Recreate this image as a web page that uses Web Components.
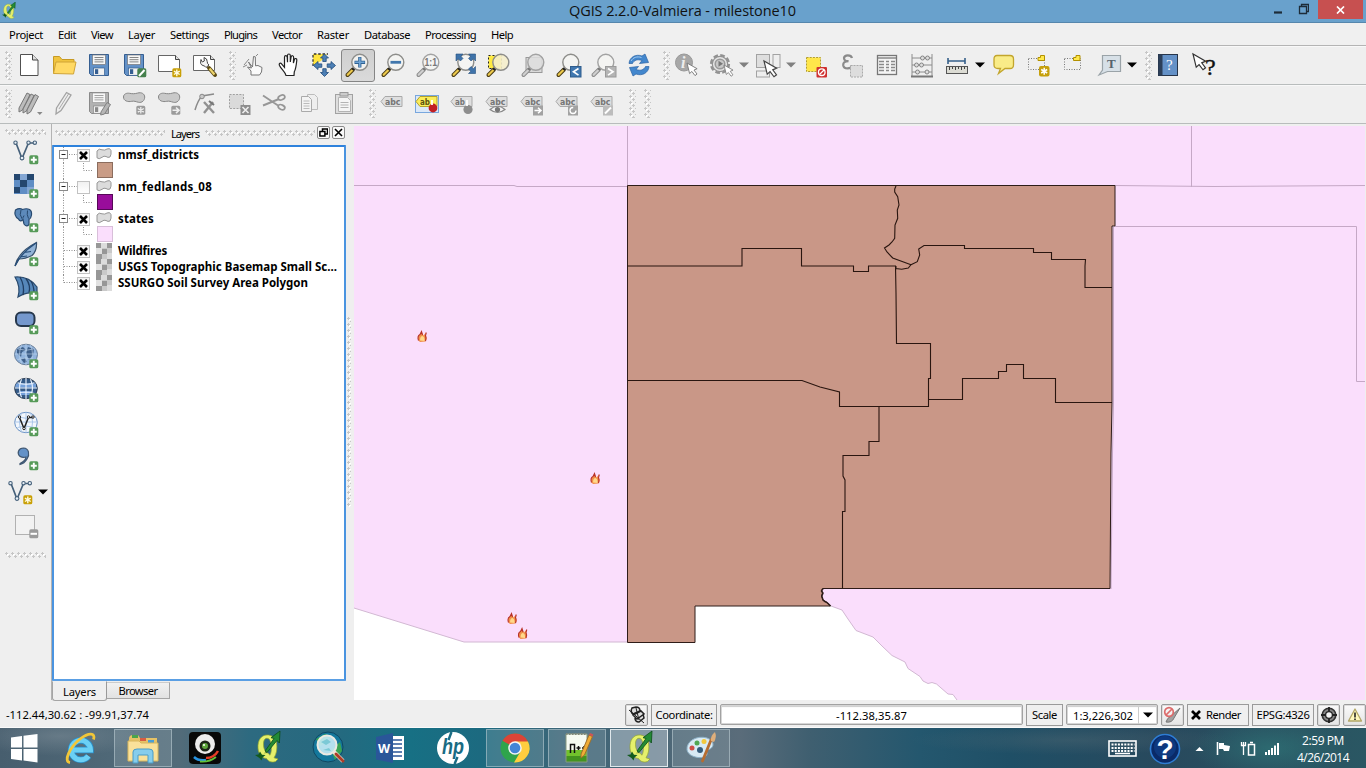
<!DOCTYPE html>
<html lang="en">
<head>
<meta charset="utf-8">
<title>QGIS 2.2.0-Valmiera - milestone10</title>
<style>
html,body{margin:0;width:1366px;height:768px;overflow:hidden;background:#efefef;
font-family:"Noto Sans","DejaVu Sans",sans-serif;font-size:11.2px;color:#000}
</style>
</head>
<body>
<qgis-desktop></qgis-desktop>
<script>
const SANS = '"Open Sans","Noto Sans",sans-serif';

/* ---------- icon fragments ---------- */
const badge = (fill, mark) => `<g transform="translate(15 15)"><rect x=".3" y=".3" width="9" height="9" rx="1.6" fill="${fill}"/>${mark}</g>`;
const plus = badge('#569a58', '<path d="M4.8 1.8v6M1.8 4.8h6" stroke="#fff" stroke-width="1.9"/>');
const star = badge('#c9a007', '<path d="M4.8 1.4v6.800M1.900 3.100l5.800 3.400M1.900 6.500l5.800-3.400" stroke="#fffbe0" stroke-width="1.4"/>');
const greyBadge = m => badge('#9b9b9b', m);
const lens = (o = {}) => `<path d="M7 16.500L1.500 22" stroke="${o.g ? '#8d8d8d' : '#4a3a12'}" stroke-width="4" stroke-linecap="round"/><path d="M6.200 17.300L1.700 21.800" stroke="${o.g ? '#cfcfcf' : '#ecc94c'}" stroke-width="2.2" stroke-linecap="round"/><path d="M8.600 14.600L6.400 16.800" stroke="${o.g ? '#777' : '#222'}" stroke-width="2.6"/><circle cx="13.8" cy="9.3" r="8" fill="${o.fill || '#f4f4f2'}" fill-opacity="${o.fo || .9}" stroke="${o.g ? '#a2a2a2' : '#8d8d8a'}" stroke-width="1.4"/>`;
const floppy = (a, b, c) => `<path d="M2.500 1.500h19v21h-17l-2-2z" fill="${a}" stroke="${b}"/><rect x="5.5" y="2" width="13" height="9.5" fill="#f7f7f7" stroke="${c}" stroke-width=".7"/><path d="M7.500 4.500h9M7.500 6.700h9M7.500 8.900h9" stroke="${c}" stroke-width=".9"/><rect x="6.5" y="15" width="11" height="7.3" fill="#f2f2f2" stroke="${b}" stroke-width=".7"/><rect x="8" y="16.2" width="3.2" height="4.8" fill="${b}"/>`;
const blob = `<path d="M1.500 6C1.500 3 4.500 1.800 7.500 2.300c3 .6 5 .6 8-.2 4-1.200 7.200.7 7.200 4s-2.700 6-6.200 5.200c-3-.7-4-1.500-6.700-1C6 11.200 1.500 10 1.500 6z" fill="#c9c9c9" stroke="#868686"/>`;
const cursor = (t, f = '#fff', s = '#777') => `<path transform="${t}" d="M0 0l2.800 11.500 2.500-2.300 3.400 4.500 2.200-1.700-3.300-4.300 3.400-1.500z" fill="${f}" stroke="${s}" stroke-width="1"/>`;
const tag = (f, s, t, label = 'abc', w = 15.5) => `<path d="M1 10.500l4-5h17v10H5z" fill="${f}" stroke="${s}" stroke-linejoin="round"/><text x="5" y="13.5" font-family="DejaVu Sans,sans-serif" font-weight="700" font-size="8.5" textLength="${w}" lengthAdjust="spacingAndGlyphs" fill="${t}">${label}</text>`;
const gtag = tag('#dfdfdf', '#a9a9a9', '#757575');
const gtagShort = tag('#dfdfdf', '#a9a9a9', '#757575', 'ab', 10);
const globeLines = (s, w) => `<path d="M1 10h22M3.500 4.800q8.500 3 17 0M3.500 15.500q8.500-3 17 0M12 0v21M7.500 1.200q-4 9 0 18M16.500 1.200q4 9 0 18" fill="none" stroke="${s}" stroke-width="${w}"/>`;
const vee = `<path d="M3 3.500L9 19 15.500 3.500h6" fill="none" stroke="#45607a" stroke-width="1.7"/><g fill="#e8f0f7" stroke="#45607a" stroke-width="1.1"><circle cx="2.5" cy="3.2" r="1.7"/><circle cx="9" cy="18.5" r="1.9"/><circle cx="15.5" cy="3.2" r="1.7"/><circle cx="21.8" cy="3.2" r="1.7"/></g>`;
const qlogo = `<path d="M13 4C7.500 4 3.500 9 4 17c.4 6 3.500 10 8.500 10.500 1.500 2.500 4.500 4.500 9 3l2.500-2.500-4-1.200C22.500 23 23.500 18 22.500 11 21.500 6 17.500 4 13 4zm0 3.300c2.800 0 3.900 3.500 4.300 8 .3 4-.3 7.500-1.500 8.900-1.300-2.500-3.300-3-5.300-2 .7-1 1.500-1.300 2.500-1.200-2.500-.8-3.400-4-3.500-7.500-.1-3.500 1-6.200 3.500-6.200z" fill="#e5f06c" stroke="#92a52d" stroke-width=".7"/><path d="M11 20L20 7.500l-3-.8L26 0l-.6 12-2.400-2.500L13 21.500z" fill="#238a35" stroke="#0c4d18" stroke-width=".8"/><path d="M1 24l3.500-.5L6 20.500l2 3.300 3.500.3-3 2.400L7.500 29.500l-2-2.600z" fill="#135a1d"/>`;

const ICONS = {
 new:`<path d="M3.500 1.500h12l5.500 5.500v15.500h-17.500z" fill="#fff" stroke="#505050"/><path d="M15.500 1.500v5.500h5.500" fill="#ddd" stroke="#444"/>`,
 open:`<path d="M1.500 20.500v-17h6l2.500 3h12v3" fill="#f0c43f" stroke="#c79a24"/><path d="M1.500 20.500l2.500-11.500h20l-2.500 12z" fill="#ffd964" stroke="#d0a437"/>`,
 save:floppy('#6391c7','#355e91','#777'),
 saveas:floppy('#6391c7','#355e91','#777')+badge('#45804d','<path d="M2 8l5.500-6" stroke="#fff" stroke-width="2"/>'),
 composer:`<path d="M1.500 2.500h17l4 4v12h-21z" fill="#fff" stroke="#666"/><path d="M18.500 2.500v4h4" fill="#ddd" stroke="#444"/>`+star,
 manager:`<path d="M1.500 2.500h17l4 4v11h-21z" fill="#fff" stroke="#666"/><path d="M18.500 2.500v4h4" fill="#ddd" stroke="#444"/><path d="M17 15l6 7" stroke="#5b4a14" stroke-width="4" stroke-linecap="round"/><path d="M17.500 15.500l5 6" stroke="#ecd36c" stroke-width="2.2"/><path d="M9 6.500q-1.500 5 2 6 2 .3 3 2l3-2.500q-2-1.500-1.800-3.500.2-3-3.200-4l.3 3.500-2 1z" fill="#f5f5f5" stroke="#444"/>`,
 touch:`<path d="M9 22v-4L5.500 14l4 1-3-6 4 5 1-10.500 1.800.3.2 9 2.500-.3 4 2-.5 4.500-2 3z" fill="#fafafa" stroke="#777"/><path d="M2 12l5-6M14 3l2-2M1 14l4-2" stroke="#888"/>`,
 pan:`<path d="M9 22.500c-.5-3.500-5-6.500-6.500-10-1-2.500 1-3 2.500-1.200l2.500 3V4.200c0-2 2.500-2 2.700 0l.3 5V2.500c0-2 2.800-2 2.800 0V9l.8-5c.3-2 2.700-1.500 2.500.5l-.2 5.500 1-3.500c.6-1.700 2.700-1 2.400.8-.5 5-1 9-2.500 11.500l-.3 3.700z" fill="#fff" stroke="#222" stroke-width="1.2"/>`,
 pansel:`<path d="M1 12V1h14l-6 7z" fill="#ffe53f"/><path d="M1 13V1h15" fill="none" stroke="#333" stroke-width="1.3" stroke-dasharray="2.5 1.8"/><g fill="#4c7fb5" stroke="#1f4a7a" stroke-width=".8"><path d="M12.500 1l4 4h-2.300v3.500h-3.400V5H8.500z"/><path d="M12.500 23.500l4-4h-2.300v-3.800h-3.400v3.800H8.500z"/><path d="M1.500 12.500l4.500-4v2.400h3.800v3.400H6v2.200z"/><path d="M23.500 12.500l-4.500-4v2.400h-3.800v3.400H19v2.200z"/></g>`,
 zoomin:lens()+`<path d="M13.800 4v10.600M8.500 9.300h10.600" stroke="#2f6293" stroke-width="3.2"/><path d="M13.800 4.600v9.400M9.100 9.300h9.400" stroke="#6fa3d4" stroke-width="1.6"/>`,
 zoomout:lens()+`<path d="M8.500 9.300h10.600" stroke="#4177ad" stroke-width="2.8"/>`,
 zoom11:lens({g:1})+`<text x="7.5" y="13" font-size="10" font-weight="700" font-family="Liberation Sans,sans-serif" textLength="12.5" lengthAdjust="spacingAndGlyphs" fill="#777">1:1</text>`,
 zoomfull:lens()+`<g fill="#3f73aa" stroke="#244f7d" stroke-width=".6"><path d="M4 1h7L8.800 3.200l2.200 2.200-2.600 2.600-2.200-2.200L4 8z"/><path d="M23.500 1h-7l2.200 2.200-2.200 2.200 2.600 2.600 2.200-2.200 2.200 2.200z"/><path d="M23.500 20.500h-7l2.200-2.200-2.200-2.200 2.600-2.600 2.200 2.200 2.200-2.200z"/></g>`,
 zoomsel:`<rect x="1.5" y="2.5" width="13" height="13" fill="#ffea3f" stroke="#222" stroke-dasharray="2 2"/>`+lens({fill:'#f5eecb'}),
 zoomlayer:`<rect x="4" y="4.5" width="16" height="15" fill="#dadada" stroke="#999"/>`+lens({g:1,fill:'#dedede',fo:.85}),
 zoomprev:lens()+`<rect x="13.5" y="13.5" width="10.5" height="10.5" fill="#4178b0" stroke="#2f5d8d"/><path d="M21.500 15.500l-5 3.300 5 3.300" fill="none" stroke="#fff" stroke-width="1.7"/>`,
 zoomnext:lens({g:1})+`<rect x="13.5" y="13.5" width="10.5" height="10.5" fill="#b4b4b4" stroke="#9a9a9a"/><path d="M16 15.500l5 3.300-5 3.300" fill="none" stroke="#fff" stroke-width="1.7"/>`,
 refresh:`<g fill="#4387cd" stroke="#2a62a4" stroke-width=".7"><path d="M2 10.500C2.500 4 9 .7 15 3l3-2 3.500 8.500-9 1 2.500-3C10.500 6 7 7 5.500 10.500z"/><path d="M22 13.500c-.5 6.500-7 9.800-13 7.500l-3 2-3.500-8.500 9-1-2.500 3c4.500 1.500 8 .5 9.500-3z"/></g><path d="M4 8C6 4.500 10 3 14.500 4.500" fill="none" stroke="#a4cbf0"/>`,
 info:`<circle cx="10" cy="9.5" r="8.5" fill="#a7a7a7" stroke="#989898"/><text x="7" y="15" font-family="Liberation Serif,serif" font-size="16" font-weight="700" font-style="italic" fill="#eee">i</text>`+cursor('translate(13 10) scale(.92)'),
 action:`<circle cx="11" cy="11" r="8.6" fill="none" stroke="#929292" stroke-width="3" stroke-dasharray="4.5 2.25"/><circle cx="11" cy="11" r="7.7" fill="#e4e4e4" stroke="#929292" stroke-width="1.2"/><circle cx="11" cy="11" r="4.8" fill="#c8c8c8" stroke="#999" stroke-width="1.5"/><path d="M9.500 7.800l4.500 3-4.500 3z" fill="#777"/>`+cursor('translate(15 12) scale(.82)'),
 select:`<g fill="#dedede" stroke="#a2a2a2"><rect x=".5" y="1.5" width="13" height="13"/><rect x="17" y="1.5" width="7" height="13" fill="#eee"/><rect x=".5" y="18" width="13" height="6" fill="#eee"/></g>`+cursor('translate(8 8) scale(1.15)','#fff','#444'),
 deselect:`<rect x="1.5" y="4.5" width="14" height="14" fill="#ffe64a" stroke="#b29f2f" stroke-dasharray="2 1.2"/><rect x="11.5" y="14" width="10.5" height="10.5" rx="1" fill="#cf3030"/><circle cx="16.75" cy="19.2" r="3.3" fill="none" stroke="#fff" stroke-width="1.3"/><path d="M14.500 21.500l4.500-4.500" stroke="#fff" stroke-width="1.3"/>`,
 expr:`<path d="M12 5C11 1.500 4.500 1.500 4 5c0 2.500 2 3.300 4.500 3.200-3.500 0-5.500 1.300-5.300 4 .5 4.500 8 4 9.300.5" fill="none" stroke="#8a8a8a" stroke-width="2.2"/><rect x="10.5" y="12.5" width="12" height="11.5" fill="#ddd" stroke="#aaa" stroke-dasharray="2 1"/>`,
 table:`<rect x="2.5" y="2.5" width="19" height="19" fill="#f4f4f4" stroke="#777" stroke-width="1.3"/><path d="M3 5h18M4 8.500h5M11 8.500h3M16 8.500h4M4 11.500h5M11 11.500h3M16 11.500h4M4 14.500h5M11 14.500h3M16 14.500h4M4 17.500h5M11 17.500h3M16 17.500h4" stroke="#8a8a8a" stroke-width="1.5"/>`,
 abacus:`<path d="M2 1v22M22 1v22M2 5h20M2 12h20M2 19h20" stroke="#8c8c8c" fill="none"/><path d="M1 23.500h22" stroke="#777" stroke-width="2"/><g fill="#ddd" stroke="#858585"><circle cx="12.5" cy="5" r="2"/><circle cx="17.5" cy="5" r="2"/><circle cx="6.5" cy="12" r="2"/><circle cx="11.5" cy="12" r="2"/><circle cx="7.5" cy="19" r="2"/><circle cx="17" cy="19" r="2"/></g>`,
 measure:`<path d="M3 8h17M3 5v6M20 5v6" stroke="#36608a" stroke-width="1.6"/><rect x="1.5" y="13.5" width="21" height="7" fill="#dcdcd4" stroke="#555"/><path d="M4.500 14v3M7.500 14v2M10.500 14v3M13.500 14v2M16.500 14v3M19.500 14v2" stroke="#444"/>`,
 tips:`<path d="M5 2.500h13q3.500 0 3.500 3.500v6q0 3.500-3.500 3.500h-5l-6.500 5 2-5H6q-4 0-4-3.500V6q0-3.500 3-3.500z" fill="#f9ec88" stroke="#c2a52c" stroke-width="1.3"/>`,
 bmnew:`<rect x="1.5" y="5.5" width="16" height="11" fill="none" stroke="#777" stroke-dasharray="1 1.5"/><path d="M11 4.500h2.500v-2h4v5H11z" fill="#ffe94b" stroke="#b29000"/><rect x="12" y="13" width="10.5" height="10.5" rx="2" fill="#c6a00c"/><path d="M17.200 14.700v7M14.200 16.500l6 3.500M14.200 20l6-3.500" stroke="#fff" stroke-width="1.5"/>`,
 bm:`<rect x="2.5" y="5.5" width="16" height="11" fill="none" stroke="#777" stroke-dasharray="1 1.5"/><path d="M11.500 4.500h2.500v-2h4v5h-6.500z" fill="#ffe94b" stroke="#b29000"/>`,
 anno:`<path d="M5.500 2.500h18v16H10.500L2 22l3.500-5z" fill="#d7e0e7" stroke="#9aa3a8" stroke-width="1.2"/><text x="10" y="15" font-size="13" font-weight="700" font-family="Liberation Serif,serif" fill="#55636d">T</text>`,
 help:`<rect x="2.5" y="1.5" width="19" height="21" fill="#6491c7" stroke="#27354a"/><rect x="2.5" y="1.5" width="4" height="21" fill="#2c3f59"/><text x="10" y="17" font-size="15" font-family="Liberation Serif,serif" fill="#fff">?</text>`,
 whats:cursor('translate(2 1) scale(1.15)','#fff','#333')+`<text x="14" y="21.5" font-size="24" font-family="Liberation Serif,serif" fill="#111" stroke="#111" stroke-width=".4">?</text>`,
 edits:`<g fill="#bcbcbc" stroke="#777"><path d="M2 17L10 2l3 1.500L5.500 19 2 21z"/><path d="M6 18L14 3l3 1.500L9.500 20 6 22z"/><path d="M10 19L18 3.500l3.500 2L13.500 21l-3.500 2z"/></g><path d="M20 21h5.500L22.800 24z" fill="#888"/>`,
 pencil:`<path d="M4.500 17L14.500 1.500 19 4 9 19.500l-5 3.500z" fill="#ededed" stroke="#a2a2a2" stroke-width="1.3"/><path d="M7 18L16.500 3" stroke="#aaa"/>`,
 saveedit:floppy('#b2b2b2','#898989','#999')+`<path d="M14 21l6-9.500 3.500 2-6 9.500-3.800 1z" fill="#b5b5b5" stroke="#818181"/>`,
 addf:blob+`<g transform="translate(-1 -.5)">${greyBadge('<path d="M4.800 1.500v6.600M1.800 3l6 3.600M1.800 6.600l6-3.600" stroke="#eee" stroke-width="1.3"/>')}</g>`,
 movef:blob+`<g transform="translate(-1 -.5)">${greyBadge('<path d="M1.500 4.800h6M5 2l3 2.800-3 2.800" fill="none" stroke="#eee" stroke-width="1.6"/>')}</g>`,
 node:`<path d="M3 19Q6 9 10 5l12-2" fill="none" stroke="#8a8a8a" stroke-width="1.5"/><circle cx="10" cy="5.5" r="2.3" fill="#c9c9c9" stroke="#888"/><path d="M12 11l10 11M21 11l-9 11" stroke="#919191" stroke-width="2.4"/><path d="M17 10l5 4" stroke="#777" stroke-width="2"/>`,
 delf:`<rect x="2.5" y="3.5" width="14" height="14" fill="#dadada" stroke="#a0a0a0" stroke-dasharray="2 1.3"/><rect x="13.5" y="14" width="10" height="10" fill="#8d8d8d"/><path d="M15.500 16l6 6M21.500 16l-6 6" stroke="#eee" stroke-width="1.6"/>`,
 cut:`<path d="M1 4.500L16 14.500M1 14.500L17 8" stroke="#979797" stroke-width="1.9"/><g fill="none" stroke="#969696" stroke-width="1.7"><ellipse cx="19.5" cy="6.5" rx="3.5" ry="2.3" transform="rotate(-25 19.5 6.5)"/><ellipse cx="19.5" cy="16.2" rx="3.5" ry="2.3" transform="rotate(25 19.5 16.2)"/></g>`,
 copy:`<path d="M10.500 3.500h7l3 3v12h-10z" fill="#eee" stroke="#bcbcbc"/><path d="M4.500 5.500h7l3 3v12h-10z" fill="#f3f3f3" stroke="#aaa"/><path d="M6.500 10h6M6.500 12.500h6M6.500 15h6M6.500 17.500h6" stroke="#bbb"/>`,
 paste:`<rect x="3.5" y="3.5" width="17" height="19" fill="#dedede" stroke="#a2a2a2"/><rect x="8" y="1.5" width="8" height="3.5" fill="#ccc" stroke="#999"/><path d="M6.500 6.500h9l3 3v11h-12z" fill="#f5f5f5" stroke="#b3b3b3"/><path d="M8.500 11.500h8M8.500 14h8M8.500 16.500h8" stroke="#b3b3b3"/>`,
 label:gtag,
 labelpin:`<rect x=".5" y="4.5" width="23" height="17" fill="#dbe8f8" stroke="#79a7de"/>`+tag('#fbee5a','#b3a22c','#5b5210','ab',10)+`<circle cx="18" cy="17" r="4.4" fill="#c21f24"/><path d="M17 14V9" stroke="#fff" stroke-width="1.8"/>`,
 labelpin2:gtagShort+`<circle cx="18" cy="18.5" r="4.6" fill="#8d8d8d"/><path d="M17 15V9" stroke="#fff" stroke-width="1.8"/>`,
 labeleye:gtag+`<path d="M5 18.500q7.500-6.500 15 0-7.500 6-15 0z" fill="#f4f4f4" stroke="#888" stroke-width="1.2"/><circle cx="12.500" cy="18.500" r="2.6" fill="#777"/>`,
 labelmove:gtag+`<rect x="13" y="14.5" width="10" height="10" fill="#a2a2a2"/><path d="M14.500 19.500h6M18 16.700l3 2.800-3 2.800" stroke="#fff" stroke-width="1.5" fill="none"/>`,
 labelrot:gtag+`<rect x="13" y="14.5" width="10" height="10" fill="#a2a2a2"/><circle cx="18" cy="19.5" r="3" fill="none" stroke="#fff" stroke-width="1.3" stroke-dasharray="14 5"/>`,
 labeledit:gtag+`<rect x="13" y="14.5" width="10" height="10" fill="#bcbcbc"/><path d="M15 22.500l6-6" stroke="#fff" stroke-width="2"/>`,
 vector:`<g transform="translate(-1 -.5)">${vee}</g>`+plus,
 raster:`<rect x="0" y="0" width="20" height="20" fill="#5f8dc4"/><path d="M0 0h6v6H0zM13 0h7v6h-7zM6 6h7v7H6zM0 13h6v6H0z" fill="#24476f"/><path d="M6 0h7v6H6zM13 13h7v7h-7z" fill="#83a6d3"/>`+plus,
 postgis:`<path d="M1.500 2q4-2.500 7-.5 4-1.500 7 0Q18 3 17.500 7q-.5 3.500-2.500 4.500v5q-2.500 3-5-.5l-1-4.500q-3 3-4.500-.5Q-.5 8 1.500 2z" fill="#5d8abb" stroke="#27496f" stroke-width="1.2"/><path d="M7 2q-2 5 1 8.500 1.500-1 2-3M13.500 2.500q-1 4 1 8" fill="none" stroke="#27496f"/>`+plus,
 spatialite:`<path d="M1 24Q4 10 22.500.5 23 9 18 13.500 11 17 5 17z" fill="#92b3d6" stroke="#37516d" stroke-width="1.2"/><path d="M1 24Q7 11 22 1M6 15l7-1M10 10.500l7-1" fill="none" stroke="#274e7a" stroke-width="1.2"/>`+plus,
 mssql:`<path d="M1 1q14-1 22 10v8q-7-5-19 2 3-10-3-20z" fill="#5687ba" stroke="#29496c" stroke-width="1.2"/><path d="M6 1q5 9 3 18M12 2.500q5 7 3 14M17 5q3 5 3 12" fill="none" stroke="#203e63" stroke-width="1.3"/>`+plus,
 oracle:`<rect x="2" y="2.5" width="18.5" height="13.5" rx="5" fill="#7598cd" stroke="#27384d" stroke-width="2"/>`+plus,
 wms:`<ellipse cx="12" cy="10.5" rx="11.5" ry="10.3" fill="#91b3dc" stroke="#6a7f99"/><path d="M3 5l6-2 3 3-4 2-1 5-4-4zM14 3l6 2-1 6-4 5-3-7zM7 15l4-1 2 4-3 1z" fill="#3f608a"/>`+globeLines('#c4d8ef',.6)+plus,
 wcs:`<ellipse cx="12" cy="10.5" rx="11.3" ry="10.2" fill="#355b88" stroke="#2b3c51"/><path d="M2 5.500h20v4H1zM6 13h12v4H6z" fill="#75a1db"/>`+globeLines('#eef5ff',1.1)+plus,
 wfs:`<ellipse cx="12" cy="10.5" rx="11.3" ry="10.2" fill="#f3f7fc" stroke="#6a92c5"/>`+globeLines('#9cbde6',.8)+`<path d="M5.500 5.500L10 16.500 14.500 5.500h5" fill="none" stroke="#222" stroke-width="1.5"/><g fill="#fff" stroke="#222"><circle cx="5.5" cy="5" r="1.2"/><circle cx="10" cy="16.5" r="1.2"/><circle cx="14.5" cy="5" r="1.2"/><circle cx="19" cy="5" r="1.2"/></g>`+plus,
 csv:`<path d="M6 17.500q6-3 6-6.500-3 1-6-.6C2.500 7 4.500 2 9.500 2c5.500.3 6.500 6.500 3.500 11-2 3.500-4.500 5-7 5.500z" fill="#6492c8" stroke="#405771" stroke-width="1.2"/>`+plus,
 newvec:vee+star,
 remove:`<rect x="1.5" y="1.5" width="19" height="19" fill="#f2f2f2" stroke="#b1b1b1"/>`+greyBadge('<path d="M1.500 4.800h6.500" stroke="#fff" stroke-width="2"/>')
};

const TASK = {
 win:`<g fill="#fff"><path d="M3 7.500l11-1.500v11.500H3zM15.500 5.800L29.500 4v13.500h-14zM3 19h11v11.500L3 29zM15.500 19h14v13.500l-14-1.900z"/></g>`,
 ie:`<path d="M10 20h17.500A9.700 9.700 0 1 0 25.500 26" fill="none" stroke="#2a91cc" stroke-width="6.6"/><path d="M10 20h17.500A9.700 9.700 0 1 0 25.500 26" fill="none" stroke="#6bd0f5" stroke-width="5"/><path d="M7 32.500C0 31.500 7 17 17 9c8-6 16-7 13.500.5" fill="none" stroke="#f2c638" stroke-width="2.8"/>`,
 folder:`<path d="M4 9q0-4 4-4h5l2 3h17v22H4z" fill="#e5c267"/><path d="M7 5h6v3H7z" fill="#4aa54c"/><path d="M15 8h6v3h-6z" fill="#d75d42"/><path d="M23 10h6v3h-6z" fill="#4a9fd5"/><path d="M3 11h11l2 2h17v18H3z" fill="#f9e19a" stroke="#d7b65c"/><path d="M8 33V22q0-3 4-3h12q4 0 4 3v11h-5v-8H13v8z" fill="#86cdec" stroke="#4b9cc7"/>`,
 cam:`<rect x="2" y="2" width="32" height="32" rx="4" fill="#080808"/><path d="M7 27q4 4 12 3" fill="none" stroke="#2894e2" stroke-width="2.5"/><path d="M19 28q8 0 12-7" fill="none" stroke="#e63e27" stroke-width="2.5"/><path d="M13 31.500q9 1 16-4.500" fill="none" stroke="#62c23a" stroke-width="1.8"/><circle cx="18" cy="14" r="10" fill="#ececec"/><circle cx="18" cy="16" r="5.5" fill="#1c2418"/><circle cx="18" cy="16" r="3" fill="#5ea53c"/><circle cx="17" cy="15" r="1" fill="#fff"/>`,
 q:`<g transform="translate(5 1)">${qlogo}</g>`,
 globe:`<circle cx="17" cy="17" r="15" fill="#14789c" stroke="#104862"/><path d="M5 9l9-5 5 2-3 6-7 4zM20 20l9-8 2 9-7 9z" fill="#3ba553"/><circle cx="16" cy="15" r="9.5" fill="#c6ebf6" fill-opacity=".9" stroke="#ebe9e2" stroke-width="2"/><path d="M10 12l6-3 4 3-5 3zM12 20l6-2 2 3" fill="#7cc9d6"/><path d="M23 22l9 9" stroke="#efe6dc" stroke-width="4"/><path d="M25 24l7 7" stroke="#ad3d27" stroke-width="3" stroke-linecap="round"/>`,
 word:`<rect x="17" y="6" width="14" height="24" fill="#fff"/><path d="M20 10h9M20 14h9M20 18h9M20 22h9M20 26h9" stroke="#2a5699" stroke-width="1.5"/><path d="M3 7l17-4v30L3 29.500z" fill="#2a5699"/><text x="5" y="23" font-family="Open Sans,sans-serif" font-weight="700" font-size="12.5" fill="#fff">W</text>`,
 hp:`<circle cx="18" cy="18" r="16" fill="#fff"/><text x="7" y="24" font-family="Liberation Sans,sans-serif" font-style="italic" font-weight="700" font-size="22" textLength="22" lengthAdjust="spacingAndGlyphs" fill="#196b83">hp</text><path d="M16.500 2l-3 8M19.500 34l3-7" stroke="#196b83" stroke-width="2.4"/>`,
 chrome:`<circle cx="18" cy="18" r="14.5" fill="#2fa44c"/><path d="M18 18L5.500 10.700A14.500 14.500 0 0 1 31 11.500z" fill="#db4437"/><path d="M18 11.500h13A14.500 14.500 0 0 1 17 32.500l6.500-11z" fill="#ffcd3f"/><circle cx="18" cy="18" r="6.8" fill="#f4f4f4"/><circle cx="18" cy="18" r="5.3" fill="#4285d6"/>`,
 npp:`<path d="M7 4h21v28H7z" fill="#f6fbf2"/><path d="M7 20h21v12H7z" fill="#72c32c"/><path d="M7 26h21v6H7z" fill="#43941f"/><path d="M7 4h21" stroke="#777" stroke-width="2" stroke-dasharray="1.5 1.5"/><path d="M7 4h21v28H7z" fill="none" stroke="#889980"/><path d="M11.500 23V14.500h4V23M17.500 18h4M19.500 16v4M23 18h4M25 16v4" fill="none" stroke="#111" stroke-width="1.5"/><path d="M22 24l8-19 3.500 1.500-8 18.500-3.500 3z" fill="#f0ac35" stroke="#9d702c"/><path d="M30 5l1-2 3.500 1.500-1 2z" fill="#ce5555"/>`,
 paint:`<path d="M4 20C3 11 14 5 24 8c8 3 7 9 3 11-3 1-4 2-3 4 1 7-18 6-20-3z" fill="#d8eaf4" stroke="#8eb2c8"/><circle cx="9" cy="18" r="2.5" fill="#ce4e49"/><circle cx="14" cy="13" r="2.5" fill="#52a653"/><circle cx="21" cy="11.5" r="2.5" fill="#f2c83d"/><circle cx="17" cy="20" r="3" fill="#355c7c"/><path d="M19.500 31L28 10" stroke="#b66c30" stroke-width="2.8" stroke-linecap="round"/><path d="M28 11q-1-5 4-9 2 5-1 10z" fill="#deae7b"/>`
};

/* ---------- base and small elements ---------- */
class Base extends HTMLElement {
  connectedCallback() {
    if (this.shadowRoot) return;
    this.attachShadow({mode: 'open'}).innerHTML = `<style>${this.css()}</style>${this.html()}`;
    this.ready();
  }
  css() { return ':host{display:block}'; }
  html() { return '<slot></slot>'; }
  ready() {}
  a(n, d = '') { return this.getAttribute(n) ?? d; }
}
const def = (n, c) => customElements.define(n, c);

/* Text run that is tracked to an exact advance width (attribute w). */
def('fit-text', class extends Base {
  css() { return ':host{display:inline-block;white-space:nowrap;flex:none}span{display:inline-block;white-space:nowrap}'; }
  html() { return '<span><slot></slot></span>'; }
  ready() {
    const w = +this.a('w', 0), s = this.shadowRoot.querySelector('span');
    if (!w) return;
    s.style.letterSpacing = (w - s.getBoundingClientRect().width) / this.textContent.length + 'px';
    this.style.width = w + 'px';
  }
});

def('q-icon', class extends Base {
  css() { return ':host{display:block;width:24px;height:24px;flex:none}svg{display:block;overflow:visible}'; }
  html() { return `<svg width="24" height="24" viewBox="0 0 24 24">${ICONS[this.a('name')]}</svg>`; }
});

def('tool-button', class extends Base {
  css() { return `:host{display:flex;width:35px;height:34px;align-items:center;justify-content:center;flex:none}
    :host([active]){box-sizing:border-box;width:34px;margin-right:1px;height:33px;border:1px solid #858585;border-radius:3px;background:linear-gradient(#cfcfcf,#dadada)}`; }
  html() { return `<q-icon name="${this.a('icon')}"></q-icon>`; }
});

def('drop-arrow', class extends Base {
  css() { return ':host{display:flex;width:12px;justify-content:center;flex:none;color:#808080}:host([dark]){color:#000}svg{display:block}'; }
  html() { return '<svg width="10" height="6"><path d="M0 .5h10L5 5.500z" fill="currentColor"/></svg>'; }
});

def('tool-grip', class extends Base {
  css() {
    const dots = c => `radial-gradient(circle at 1.5px 1.5px,${c} 1px,transparent 1.4px)`;
    return `:host{display:block;flex:none;width:7px;height:29px;background:${dots('#c6c6c6')} 0 0/6px 6px,${dots('#c6c6c6')} 3px 3px/6px 6px,${dots('#fff')} 1px 1px/6px 6px}
    :host([flat]){width:auto;height:6px}`;
  }
  html() { return ''; }
});

def('tool-bar', class extends Base {
  css() { return ':host{display:flex;align-items:center;height:39px;box-sizing:border-box;border-bottom:1px solid #b8bcbc;flex:none;padding-left:5px;box-shadow:inset 0 1px #f8f8f8}:host([raised]){padding-bottom:2px}'; }
});

def('title-bar', class extends Base {
  css() { return `:host{display:grid;grid-template-columns:1fr auto 1fr;height:23px;box-sizing:border-box;background:#69a1cc;border-bottom:1px solid #5687ad;flex:none;align-items:start;font:14.5px ${SANS};color:#111}
    .logo{margin:2px 0 0 1px;display:block}.t{line-height:22px;margin-left:-1px}.c{justify-self:end;display:flex;height:19px;padding-right:3px}.x{width:45px;background:#c75050;display:grid;place-items:center}svg{display:block}.m{margin-right:9px}`; }
  html() { return `<svg class="logo" width="17" height="17" viewBox="0 0 30 32">${qlogo}</svg><fit-text class="t" w="227">QGIS 2.2.0-Valmiera - milestone10</fit-text>
    <div class="c"><svg class="m" width="36" height="19"><path d="M1 12.500h8" stroke="#1d2c38" stroke-width="2.2"/><path d="M26.500 6.500h7v7h-7zM28.500 6V4.500h7v7H34" fill="none" stroke="#1d2c38" stroke-width="1.3"/></svg><div class="x"><svg width="9" height="8"><path d="M1 .5l7 7M8 .5l-7 7" stroke="#fff" stroke-width="1.7"/></svg></div></div>`; }
});

def('menu-bar', class extends Base {
  css() { return ':host{display:flex;gap:15px;height:23px;box-sizing:border-box;padding-left:9px;border-bottom:1px solid #b4b4b4;line-height:24px;flex:none;background:#f0f0f0}'; }
  html() { return [['Project',34],['Edit',18],['View',22],['Layer',27],['Settings',39],['Plugins',33],['Vector',30],['Raster',32],['Database',46],['Processing',51],['Help',22]].map(([t,w]) => `<fit-text w="${w}">${t}</fit-text>`).join(''); }
});

/* ---------- layer tree ---------- */
def('layer-row', class extends Base {
  css() { return `:host{display:flex;height:16px;align-items:center;font-weight:700;font-size:11.5px;padding-left:4px}
    svg{display:block;flex:none}.cb{width:11px;height:11px;border:1px solid #c2c2c2;background:linear-gradient(#f1f1f1,#fff);flex:none;display:grid;place-items:center;margin:0 6px 0 -1px}
    .sw{width:14px;height:14px;border:1px solid #8c7265;margin:-2px 0 0 1px;flex:none}fit-text{margin-left:6px;line-height:16px}.pic{width:16px}`; }
  html() {
    const k = this.a('kind'), dot = 'stroke="#8c8c8c" stroke-dasharray="1 1.5"', last = this.hasAttribute('last');
    if (k === 'swatch') return `<svg width="38" height="16"><path d="M5.500 0v16" ${dot}/><path d="M25.500 0v7.500h10" fill="none" ${dot}/></svg><div class="sw" style="background:${this.a('fill')};border-color:${this.a('edge')}"></div>`;
    const vec = k === 'vector';
    const guide = `<svg width="20" height="16"><path d="M5.500 0v${last ? 8 : 16}M6 7.500h13" ${dot} fill="none"/>${vec ? '<rect x="1.5" y="3.5" width="8" height="8" fill="#fff" stroke="#8a8a8a"/><path d="M3.500 7.500h4" stroke="#222"/>' : ''}</svg>`;
    const mark = this.hasAttribute('on') ? '<svg width="9" height="9"><path d="M1 1l7 7M8 1l-7 7" stroke="#000" stroke-width="2.6"/></svg>' : '';
    const pic = vec
      ? '<svg class="pic" width="16" height="16"><path d="M1 4q2-3 5-1.200 3 1 5-.8 3-1.500 4 1.500.5 4-1 6.500-2 1-4-.5-2-1-4 .8-3 2.500-5 .5z" fill="#dcdcdc" stroke="#969696"/></svg>'
      : '<svg class="pic" width="16" height="16" shape-rendering="crispEdges"><rect width="16" height="16" fill="#c9c9c9"/><path d="M0 0h5v5H0zM11 0h5v5h-5zM6 6h5v5H6zM0 11h6v5H0z" fill="#979797"/><path d="M5 0h6v5H5zM11 10h5v6h-5z" fill="#dcdcdc"/><path d="M0 5h6v6H0z" fill="#e2e2e2"/></svg>';
    return `${guide}<div class="cb">${mark}</div>${pic}<fit-text w="${this.a('w')}">${this.a('label')}</fit-text>`;
  }
});

def('layers-panel', class extends Base {
  css() { return `:host{display:flex;flex-direction:column;width:295px;flex:none;border-left:1px solid #b3b3b3;box-sizing:border-box}
    header{display:flex;height:21px;align-items:center;padding:0 1px 4px 3px;box-sizing:border-box;flex:none}
    header tool-grip{flex:1}header fit-text{margin:1px 6px 0 6px}
    .b{width:11px;height:11px;border:1px solid #8a8a8a;border-radius:2px;background:#f9f9f9;margin-left:2px;display:grid;place-items:center;flex:none}.b svg{display:block}
    .tree{height:536px;box-sizing:border-box;border:2px solid #4491e2;border-color:#2e82dc #4a94e0 #5a9fe4 #4a94e0;background:#fff;border-radius:1px;flex:none;width:294px}
    nav{display:flex;align-items:flex-start}nav div{box-sizing:border-box;border:1px solid #a5a5a5;border-top:1px solid #ccc;text-align:center}
    .on{width:55px;height:20px;border-top-color:#efefef!important;border-radius:0 0 3px 3px;line-height:20px;border-right-color:#999}.off{width:63px;height:17px;margin-top:1px;margin-left:0;border-left:0!important;line-height:16px;background:linear-gradient(#f1f1f1,#e2e2e2)}`; }
  html() { return `<header><tool-grip flat></tool-grip><fit-text w="28">Layers</fit-text><tool-grip flat></tool-grip>
    <span class="b"><svg width="9" height="9"><path d="M3.500 3V1h5v5H6.500M.9 3.500h5v4.600h-5z" fill="none" stroke="#000" stroke-width="1.5"/></svg></span><span class="b"><svg width="9" height="9"><path d="M1 1l7 7M8 1l-7 7" stroke="#000" stroke-width="1.6"/></svg></span></header>
    <div class="tree">
    <layer-row kind="vector" on label="nmsf_districts" w="81"></layer-row><layer-row kind="swatch" fill="#c99c86" edge="#8b6d5e"></layer-row>
    <layer-row kind="vector" label="nm_fedlands_08" w="94"></layer-row><layer-row kind="swatch" fill="#990d9b" edge="#560857"></layer-row>
    <layer-row kind="vector" on label="states" w="36"></layer-row><layer-row kind="swatch" fill="#fadefc" edge="#d8bfd9"></layer-row>
    <layer-row kind="raster" on label="Wildfires" w="49"></layer-row><layer-row kind="raster" on label="USGS Topographic Basemap Small Sc..." w="219"></layer-row><layer-row kind="raster" on last label="SSURGO Soil Survey Area Polygon" w="190"></layer-row>
    </div><nav><div class="on"><fit-text w="33">Layers</fit-text></div><div class="off"><fit-text w="39">Browser</fit-text></div></nav>`; }
});

def('layer-tools', class extends Base {
  css() { return `:host{display:flex;flex-direction:column;width:51px;flex:none;padding:5px 0 0;box-sizing:border-box}
    tool-grip{margin:0 5px 0 5px}.r{height:34px;display:flex;align-items:center;padding-left:14px}.n{padding-left:8px}.n drop-arrow{margin-left:4px;width:13px}tool-grip.e{margin-top:9px}`; }
  html() { return '<tool-grip flat></tool-grip><div class="list">' + ['vector','raster','postgis','spatialite','mssql','oracle','wms','wcs','wfs','csv','newvec','remove'].map(n => `<div class="r ${n === 'newvec' ? 'n' : ''}"><q-icon name="${n}"></q-icon>${n === 'newvec' ? '<drop-arrow dark></drop-arrow>' : ''}</div>`).join('') + '</div><tool-grip flat class="e"></tool-grip>'; }
});

/* ---------- map ---------- */
def('map-canvas', class extends Base {
  css() { return ':host{display:block;flex:none;width:1011px;height:574px;margin:2px 0 0;background:#fff}svg{display:block}'; }
  html() {
    const fire = (x, y) => `<g transform="translate(${x} ${y})"><path d="M-4 3.500Q-5.500-1-2.500-2.500L-1-5.500 1-1.500 3.500-4.500 3-1.500Q5.500 1 3 4.500L-2.500 5z" fill="#f09048"/><path d="M-4 3.500Q-5.500-1-2.500-2.500L-1-5.500 0-2M3.800-4.500L3-1.500Q4 1 3 4" fill="none" stroke="#b8322a" stroke-width="1.1"/><path d="M-2.500 3.500Q-2.500-1 0-1q2.500 1 2 5z" fill="#ffd98a"/></g>`;
    const coast = '831 606L842 610 848 619 856 630.5 873 637 882 646 892 655.5 905 662 908 668.5 920 676.5 923 681 928 683.5 932 682.5 936.5 684 948 694 953 694.5 957 700';
    return `<svg width="1011" height="574" viewBox="354 126 1011 574">
    <path d="M354 126H1365V560H354zM354 550H695V642H464L354 608z" fill="#fadefc"/>
    <path d="M${coast}H1365V550H822V598L827 603z" fill="#fadefc"/>
    <path d="M354 608L464 642H628M${coast}" fill="none" stroke="#d2b8d3"/>
    <path d="M627.500 126v60M354 185.500h160l3 1h111M1191.500 126v61M1114 185.500l100 1 151-1M1115 226.500h241.500v155h8.500" fill="none" stroke="#c5a8c6"/>
    <path d="M1113.500 227v176l-1 50-1.500 136" fill="none" stroke="#c5a8c6"/>
    <path d="M627.500 185.500H1115V226H1112V403L1111 453 1110 588.500H823L821.500 590.500 822.500 593 821.500 596 823 600 827 602.500 830.500 606H695V642.500H627.500z" fill="#c99787" stroke="#2e1c18"/>
    <path d="M823 588.500L821.500 591 823 593 821.800 596 823 600 825 601.500 827 602.500 828.500 604 830.500 606" fill="none" stroke="#2e1c18" stroke-width="1.5"/>
    <path d="M627.500 266H742V248.500H801.500V266H853.500V271.500H868.500V266H895.500L896 293 896.500 343.500H930.500V378.500H928.500V406.500H839.500V392L820 387 802 380.500H627.500M896 186L894.700 189 894.700 192 897.700 196.700 899 205 897.300 210 897.700 218.300 895 225 894.700 238.300 892 242 889 245 884.500 248 887 252 892.700 258 911 264.700M896 266V268.500L901.700 269.300 908.300 268 911 264.700 917.300 261.700 919.700 255 918.700 249 924 245.500H964.500V248.500H1033.500V252.500H1051.500V259.500H1085.500L1085 266V287.500H1112M928.500 399.500H962.500V378.500H998.500V371.500H1006.500V364.500H1023.500V378.500H1055.500V402.500H1112M879 407V441.500H869V455.500H843V476L845 480V511.500H842.500V588" fill="none" stroke="#29150f" stroke-width="1.1"/>
    ${fire(422.5,337)}${fire(595.5,479)}${fire(512.5,619)}${fire(523,634)}</svg>`;
  }
});

/* ---------- status bar ---------- */
def('status-bar', class extends Base {
  css() { return `:host{display:flex;height:28px;box-sizing:border-box;padding:4px 0 2px 6px;gap:3px;flex:none;border-bottom:1px solid #fafafa}
    :host>*{box-sizing:border-box}.pos{width:616px;line-height:22px}.f{border:1px solid #9a9a9a;height:22px;line-height:20px;text-align:center;box-sizing:border-box;flex:none;background:#efefef}
    .in{background:#fff;border-color:#a2a2a2;border-radius:2px;line-height:21px;height:21px;box-shadow:inset 0 0 0 1px #d6d6d6,inset 0 2px 1px #ccc}.ic{width:23px;display:grid;place-items:center;border-radius:2px;background:linear-gradient(#fafafa,#e5e5e5);box-shadow:inset 0 0 0 1px #ddd}
    .combo{display:flex;align-items:center;padding-top:1px}.combo drop-arrow{margin-left:auto;width:18px;height:17px;align-items:center;border-left:1px solid #ccc}.rn{display:flex;align-items:center;padding-left:3px;gap:5px}svg{display:block}`; }
  html() { return `<div class="pos"><fit-text w="143">-112.44,30.62 : -99.91,37.74</fit-text></div>
    <div class="f ic"><svg width="18" height="18"><path d="M4 2q-2 4 1 6l7-3q0-4-4-4zM5 9l8-4 3 3-7 5zM7 12q0 4 4 4l5-4-1-4" fill="#ddd" stroke="#222" stroke-width="1.5"/><path d="M1 4l15 13M8 2l3 12" stroke="#222"/></svg></div>
    <div class="f" style="width:66px"><fit-text w="57">Coordinate:</fit-text></div>
    <div class="f in" style="width:303px"><fit-text w="71">-112.38,35.87</fit-text></div>
    <div class="f" style="width:37px"><fit-text w="25">Scale</fit-text></div>
    <div class="f in combo" style="width:92px;padding-left:6px"><fit-text w="60">1:3,226,302</fit-text><drop-arrow dark></drop-arrow></div>
    <div class="f ic"><svg width="19" height="18"><path d="M3 16q6 1 8-4l6-10-9 8q-4 2-5 6z" fill="#a1a1a1" stroke="#777"/><circle cx="6" cy="6" r="4.3" fill="none" stroke="#dc6b6b" stroke-width="1.7"/><path d="M3 9l6-6" stroke="#dc6b6b" stroke-width="1.7"/></svg></div>
    <div class="f rn" style="width:62px"><svg width="10" height="10"><path d="M1 1l8 8M9 1l-8 8" stroke="#000" stroke-width="2.7"/></svg><fit-text w="35">Render</fit-text></div>
    <div class="f" style="width:62px"><fit-text w="53">EPSG:4326</fit-text></div>
    <div class="f ic"><svg width="18" height="18"><circle cx="9" cy="9" r="6.8" fill="#888" stroke="#333" stroke-width="1.6"/><circle cx="9" cy="9" r="3.4" fill="#f5f5f5" stroke="#222" stroke-width="1.3"/><path d="M9 1v4.500M9 12.500V17M1 9h4.500M12.500 9H17" stroke="#222" stroke-width="1.8"/></svg></div>
    <div class="f ic"><svg width="16" height="16"><path d="M8 2l6.500 12h-13z" fill="#fff8bd" stroke="#b2a667" stroke-width="1.3" stroke-linejoin="round"/><path d="M8 5.500v5M8 11.500v1.500" stroke="#222" stroke-width="1.6"/></svg></div>`; }
});

/* ---------- Windows task bar ---------- */
def('task-item', class extends Base {
  css() { return `:host{display:grid;place-items:center;width:58px;height:38px;box-sizing:border-box;margin:1px 2px;flex:none;border:1px solid transparent}
    :host([open]){background:rgba(190,205,212,.2);border-color:rgba(200,215,222,.5)}:host([active]){background:rgba(195,205,215,.5);border-color:#e0e8ec}
    :host([start]){width:50px;margin:1px 0;padding-left:1px}svg{display:block}`; }
  html() { return `<svg width="36" height="36" viewBox="0 0 36 36">${TASK[this.a('icon')]}</svg>`; }
});
def('task-bar', class extends Base {
  css() { return `:host{display:flex;height:40px;flex:none;font:12px ${SANS};color:#fff;overflow:hidden;
    background:radial-gradient(ellipse 90px 20px at 60px 8px,rgba(130,145,155,.5),transparent),radial-gradient(ellipse 160px 15px at 1070px 12px,rgba(92,112,120,.35),transparent),radial-gradient(ellipse 80px 30px at 1270px 20px,rgba(48,130,128,.5),transparent),linear-gradient(90deg,#475e6e 0,#4f6877 110px,#526b79 180px,#2d6a80 250px,#26697f 330px,#177084 410px,#1c6a80 480px,#3c6678 560px,#4a6676 650px,#5a6c7a 740px,#3f5f70 810px,#24576e 920px,#1f4f66 1010px,#28495d 1160px,#2a5763 1366px)}
    .tray{margin-left:auto;display:flex;align-items:center}.clock{width:86px;text-align:center;line-height:17px;margin-left:-1px;padding-top:1px}.clock fit-text{display:block;margin:auto}svg{display:block}`; }
  html() {
    const open = ['folder','chrome','npp','paint'];
    const items = ['ie','folder','cam','q','globe','word','hp','chrome','npp','q2','paint'];
    return '<task-item start icon="win"></task-item>' + items.map(n => n === 'q2' ? '<task-item icon="q" active></task-item>' : `<task-item icon="${n}" ${open.includes(n) ? 'open' : ''}></task-item>`).join('') +
    `<div class="tray"><svg width="174" height="40" viewBox="1107 728 174 40"><rect x="1109" y="741" width="27" height="15" fill="none" stroke="#fff" stroke-width="1.6"/><path d="M1111.500 744.500h23M1111.500 748h23M1111.500 751h23" stroke="#fff" stroke-width="2" stroke-dasharray="2 1.2"/><path d="M1115 753.500h15" stroke="#fff" stroke-width="1.5"/>
    <circle cx="1165" cy="749" r="14.5" fill="#0a2a68" stroke="#2e7dd4" stroke-width="1.6"/><circle cx="1165" cy="747" r="11" fill="#104590" opacity=".6"/><text x="1165" y="759" text-anchor="middle" font-family="Liberation Sans,sans-serif" font-weight="700" font-size="28" fill="#fff">?</text>
    <path d="M1195.500 751l4-4 4 4z" fill="#fff"/><path d="M1217.500 742v13" stroke="#fff" stroke-width="1.6"/><path d="M1219 743h5v2l6 1-1 5h-5l-1-2h-4z" fill="#fff"/>
    <path d="M1243.500 742v13M1241.500 742v3.500h4V742" stroke="#fff" fill="none" stroke-width="1.3"/><path d="M1248.500 744.500h6v10.500h-6zM1250 742.500h3" fill="none" stroke="#fff" stroke-width="1.5"/>
    <path d="M1266 752v3M1269 750v5M1272 748v7M1275 745.500v9.500M1278 743v12" stroke="#fff" stroke-width="2"/></svg>
    <div class="clock"><fit-text w="42">2:59 PM</fit-text><fit-text w="52">4/26/2014</fit-text></div></div>`;
  }
});

def('qgis-desktop', class extends Base {
  css() { return ':host{display:flex;flex-direction:column;width:1366px;height:768px;background:#efefef;overflow:hidden}.main{display:flex;height:576px;flex:none}.split{width:8px;display:flex;align-items:center;flex:none}.split tool-grip{height:190px;width:4px;margin-left:1px}'; }
  html() {
    const B = n => `<tool-button icon="${n}"></tool-button>`, D = '<drop-arrow></drop-arrow>', K = '<drop-arrow dark></drop-arrow>';
    const G = (l = 0, r = 0) => `<tool-grip style="margin-left:${l}px;margin-right:${r}px"></tool-grip>`;
    return `<title-bar></title-bar><menu-bar></menu-bar>
    <tool-bar>${G(0,-1)}${['new','open','save','saveas','composer','manager'].map(B).join('')}${G(8,0)}${['touch','pan','pansel'].map(B).join('')}<tool-button icon="zoomin" active></tool-button>${['zoomout','zoom11','zoomfull','zoomsel','zoomlayer','zoomprev','zoomnext','refresh'].map(B).join('')}${G(7,-2)}${B('info')}${B('action')}${D}${B('select')}${D}<span style="width:2px"></span>${['deselect','expr','table','abacus','measure'].map(B).join('')}${K}${['tips','bmnew','bm','anno'].map(B).join('')}${K}${G(7,-2)}${B('help')}${B('whats')}</tool-bar>
    <tool-bar raised>${G(0,-1)}${['edits','pencil','saveedit','addf','movef','node','delf','cut','copy','paste'].map(B).join('')}${G(8,-2)}${['label','labelpin','labelpin2','labeleye','labelmove','labelrot','labeledit'].map(B).join('')}${G(10,8)}${G()}</tool-bar>
    <div class="main"><layer-tools></layer-tools><layers-panel></layers-panel><div class="split"><tool-grip></tool-grip></div><map-canvas></map-canvas></div>
    <status-bar></status-bar><task-bar></task-bar>`;
  }
});
</script>
</body>
</html>
